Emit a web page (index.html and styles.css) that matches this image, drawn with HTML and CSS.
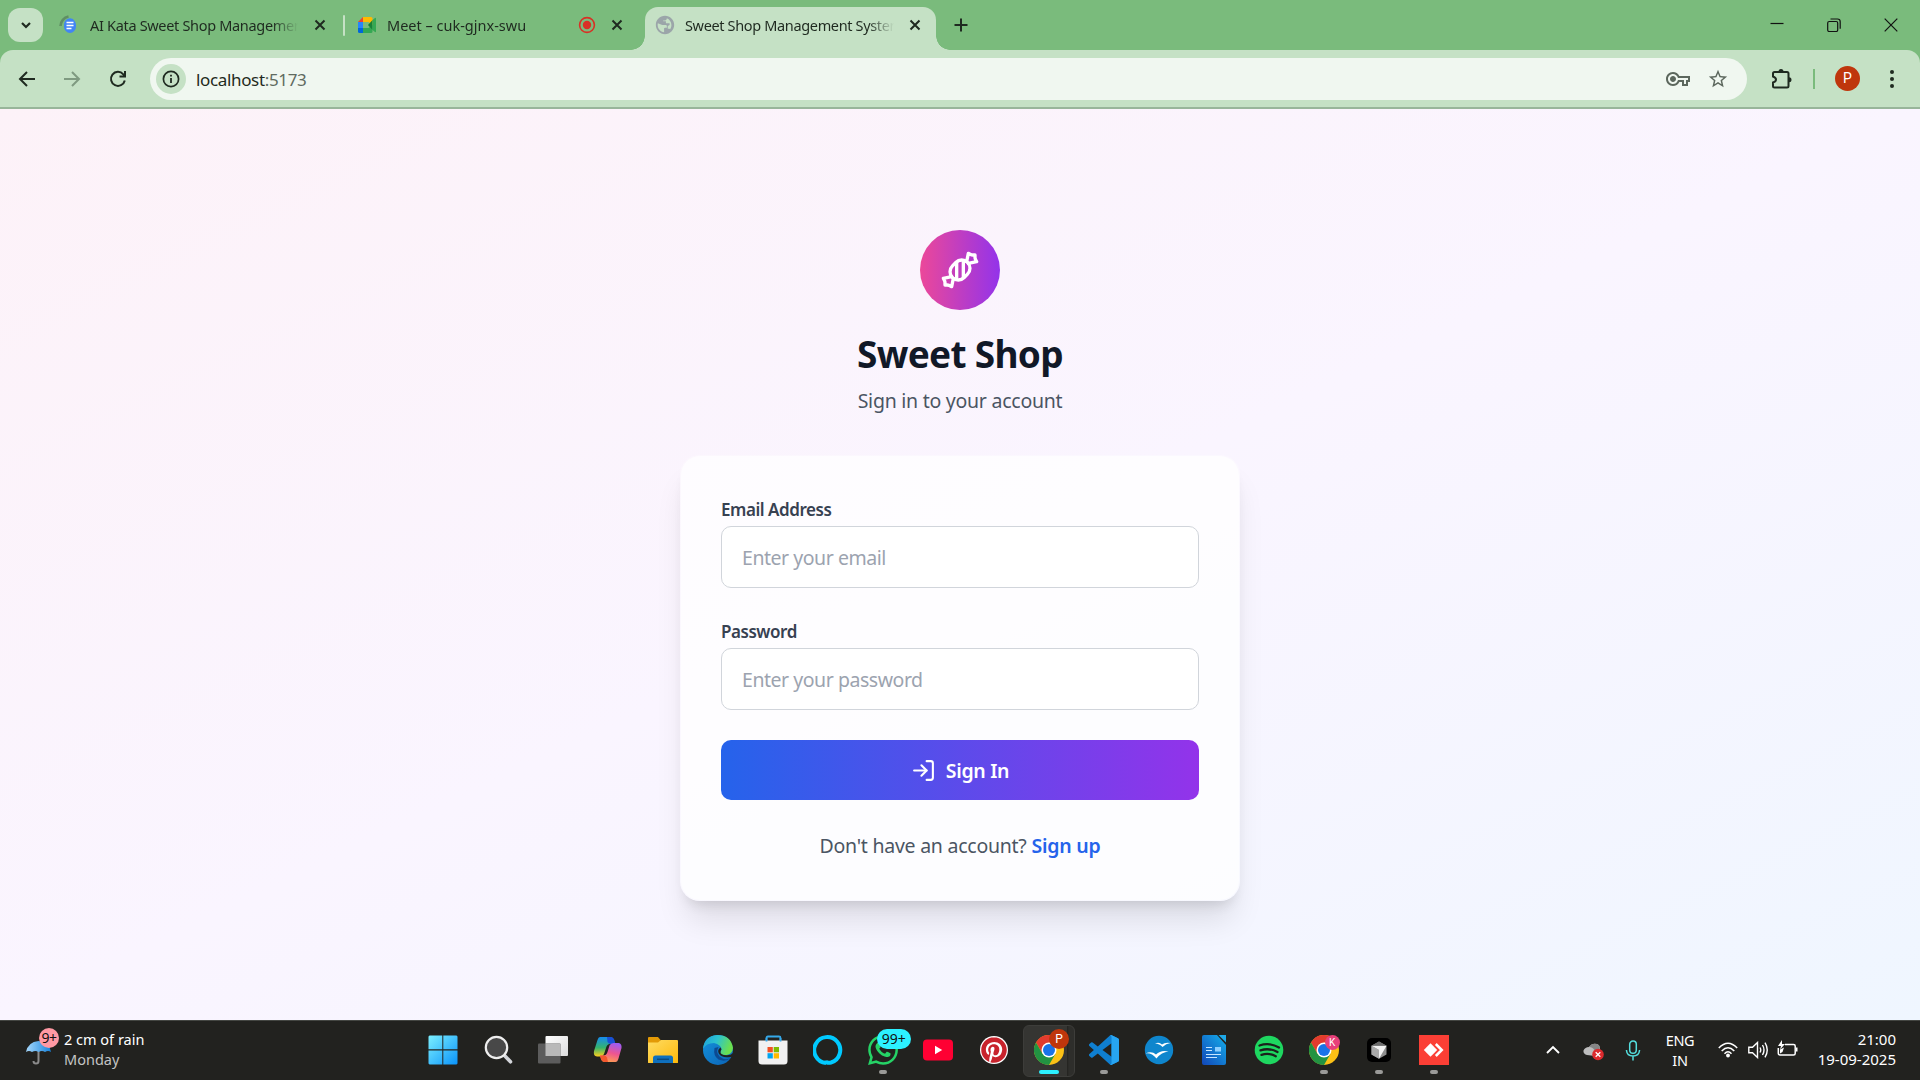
FILE: index.html
```html
<!DOCTYPE html>
<html lang="en">
<head>
<meta charset="utf-8">
<title>Sweet Shop Management System</title>
<link rel="stylesheet" href="styles.css">
</head>
<body>
<div class="desktop">
  <header class="tabstrip">
    <button class="tab-search" aria-label="Search tabs"><svg width="14" height="14" viewBox="0 0 14 14"><path d="M3 5l4 4 4-4" fill="none" stroke="#1f2a20" stroke-width="2.2"/></svg></button>
    <div class="tab tab-docs">
      <svg class="favicon" width="20" height="20" viewBox="0 0 20 20"><path d="M1.500 11A10 10 0 0 1 9.500 1.500" fill="none" stroke="#5f8f64" stroke-width="2.600"/><path d="M5 10a6 7 0 0 1 11-3.500q1 1.500 1 5a6 6.500 0 0 1-12 0z" fill="#4285f4"/><path d="M7.500 7.500h7M7.500 10.500h7M7.500 13.500h5" stroke="#fff" stroke-width="1.600"/></svg>
      <span class="tab-title t-docs">AI Kata Sweet Shop Management</span>
      <svg class="x" width="12" height="12" viewBox="0 0 12 12"><path d="M1.500 1.500l9 9m0-9l-9 9"/></svg>
    </div>
    <i class="tab-divider"></i>
    <div class="tab tab-meet">
      <svg class="favicon" width="20" height="18" viewBox="0 0 20 18"><path d="M1 6l5-5v5z" fill="#ea4335"/><path d="M6 1h8q1.500 0 1.500 1.500V9l-4-3H6z" fill="#ffba00"/><path d="M1 6h5v6H1z" fill="#2684fc"/><path d="M1 12h5v5H2.500Q1 17 1 15.500z" fill="#0066da"/><path d="M6 12h5.500l4-3v6.500q0 1.500-1.500 1.500H6z" fill="#34a853"/><path d="M11 9l4.500-5v10z" fill="#188038"/><path d="M15.500 4l2.500-2q1-.5 1 .5v13q0 1-1 .5l-2.500-2z" fill="#34a853"/></svg>
      <span class="tab-title t-meet">Meet – cuk-gjnx-swu</span>
      <svg class="rec" width="18" height="18" viewBox="0 0 18 18"><circle cx="9" cy="9" r="7.400" fill="none" stroke="#d93025" stroke-width="1.600"/><circle cx="9" cy="9" r="4.200" fill="#d93025"/></svg>
      <svg class="x" width="12" height="12" viewBox="0 0 12 12"><path d="M1.500 1.500l9 9m0-9l-9 9"/></svg>
    </div>
    <div class="tab tab-active">
      <svg class="favicon" width="22" height="22" viewBox="0 0 24 24"><path fill="#9ba5a9" d="M12 2C6.480 2 2 6.480 2 12s4.480 10 10 10 10-4.480 10-10S17.520 2 12 2zm-1 17.930c-3.950-.49-7-3.850-7-7.930 0-.62.08-1.210.21-1.790L9 12h4q1 0 1 1v2h-2c-1.100 0-1 1-1 2v2.930zm6.900-2.540c-.26-.81-1-1.390-1.900-1.390h-1v-3l2-1v-2h-4v-2h-3V7h2c1.100 0 2-.9 2-2v-.41c2.930 1.190 5 4.060 5 7.410 0 2.080-.8 3.970-2.100 5.390z"/></svg>
      <span class="tab-title t-active">Sweet Shop Management System</span>
      <svg class="x" width="12" height="12" viewBox="0 0 12 12"><path d="M1.500 1.500l9 9m0-9l-9 9"/></svg>
    </div>
    <svg class="new-tab" width="14" height="14" viewBox="0 0 14 14"><path d="M7 .5v13M.5 7h13" stroke="#1f2a20" stroke-width="2"/></svg>
    <div class="window-buttons">
      <svg width="14" height="14" viewBox="0 0 14 14"><path d="M.5 5.500h13"/></svg>
      <svg width="14" height="14" viewBox="0 0 14 14"><rect x=".7" y="3.500" width="10" height="10" rx="1.500"/><path d="M3.500 1h7q2.700 0 2.700 2.700v7"/></svg>
      <svg width="14" height="14" viewBox="0 0 14 14"><path d="M.7.7l12.600 12.600m0-12.600L.7 13.300"/></svg>
    </div>
  </header>

  <nav class="toolbar">
    <svg class="nav-icon" width="18" height="18" viewBox="0 0 18 18"><path d="M17 9H2M9 2L2 9l7 7"/></svg>
    <svg class="nav-icon nav-off" width="18" height="18" viewBox="0 0 18 18"><path d="M1 9h15M9 2l7 7-7 7"/></svg>
    <svg class="nav-icon" width="18" height="18" viewBox="0 0 18 18"><path d="M15.800 10.500A7 7 0 1 1 14.300 4.300L16 6M16 1v5.500h-5.500"/></svg>
    <div class="omnibox">
      <span class="site-info"><svg width="18" height="18" viewBox="0 0 18 18"><circle cx="9" cy="9" r="7.600" fill="none" stroke="#1f2a20" stroke-width="1.700"/><path d="M9 8v5M9 4.700v1.900" stroke="#1f2a20" stroke-width="1.800"/></svg></span>
      <span class="url">localhost<span>:5173</span></span>
      <svg class="key" width="24" height="24" viewBox="0 0 24 24"><path fill="#5c675d" d="M22 19h-6v-4h-2.680c-1.140 2.420-3.600 4-6.320 4-3.860 0-7-3.140-7-7s3.140-7 7-7c2.720 0 5.170 1.580 6.320 4H24v6h-2v4zm-4-2h2v-4h2v-2H11.940l-.23-.67C11.010 8.340 9.110 7 7 7c-2.760 0-5 2.240-5 5s2.240 5 5 5c2.110 0 4.010-1.340 4.710-3.330l.23-.67H18v4zM7 15c-1.650 0-3-1.350-3-3s1.350-3 3-3 3 1.350 3 3-1.350 3-3 3z"/></svg>
      <svg width="22" height="22" viewBox="0 0 24 24"><path fill="#5c675d" d="M22 9.240l-7.190-.62L12 2 9.190 8.630 2 9.240l5.460 4.730L5.820 21 12 17.270 18.180 21l-1.630-7.030L22 9.240zM12 15.400l-3.760 2.270 1-4.280-3.320-2.880 4.380-.38L12 6.100l1.710 4.040 4.380.38-3.320 2.880 1 4.280L12 15.400z"/></svg>
    </div>
    <svg class="extensions" width="22" height="22" viewBox="0 0 22 22"><path d="M3.500 4H16q1.500 0 1.500 1.500V18q0 1.500-1.500 1.500H3.500Q2 19.500 2 18v-3.500q3-.8 3-2.900T2 8.500v-3Q2 4 3.500 4z" fill="none" stroke="#1f2a20" stroke-width="2"/><path d="M7.500 3.500a2.500 2.500 0 0 1 5 0zM18 9.300a2.500 2.500 0 0 1 0 5z" fill="#1f2a20"/></svg>
    <i class="toolbar-divider"></i>
    <span class="avatar">P</span>
    <svg width="6" height="20" viewBox="0 0 6 20" fill="#1f2a20"><circle cx="3" cy="3" r="2"/><circle cx="3" cy="10" r="2"/><circle cx="3" cy="17" r="2"/></svg>
  </nav>

  <main class="page">
    <div class="logo"><svg width="40" height="40" viewBox="0 0 24 24" fill="none" stroke="#fff" stroke-width="2" stroke-linecap="round" stroke-linejoin="round"><path d="m9.500 7.500-2 2a4.950 4.950 0 1 0 7 7l2-2a4.950 4.950 0 1 0-7-7Z"/><path d="M14 6.500v10"/><path d="M10 7.500v10"/><path d="m16 7 1-5 1.370.68A3 3 0 0 0 19.700 3H21v1.300c0 .46.1.92.32 1.330L22 7l-5 1"/><path d="m8 17-1 5-1.370-.68A3 3 0 0 0 4.300 21H3v-1.300a3 3 0 0 0-.32-1.330L2 17l5-1"/></svg></div>
    <h1>Sweet Shop</h1>
    <p class="subtitle">Sign in to your account</p>
    <form class="card">
      <label for="email">Email Address</label>
      <input id="email" type="email" placeholder="Enter your email">
      <label for="password">Password</label>
      <input id="password" type="password" placeholder="Enter your password">
      <button class="submit" type="button"><svg width="25" height="25" viewBox="0 0 24 24" fill="none" stroke="#fff" stroke-width="2" stroke-linecap="round" stroke-linejoin="round"><path d="M15 3h4a2 2 0 0 1 2 2v14a2 2 0 0 1-2 2h-4"/><path d="M10 17l5-5-5-5"/><path d="M15 12H3"/></svg><span>Sign In</span></button>
      <p class="signup"><span>Don't have an account?</span><a>Sign up</a></p>
    </form>
  </main>

  <footer class="taskbar">
    <div class="weather">
      <div class="umbrella">
        <svg width="26" height="24" viewBox="0 0 26 24"><defs><linearGradient id="um"><stop offset="0" stop-color="#a6d8fb"/><stop offset="1" stop-color="#1683dc"/></linearGradient></defs><path d="M12.500 9v11q0 2.500-2.500 2.500T7.500 20" fill="none" stroke="#8b8b8b" stroke-width="2"/><path d="M0 11Q2 1 12.500 0 23 1 25 11q-3-2-6 0-3-2-6.500 0-3-2-6.500 0-3-2-6 0z" fill="url(#um)"/></svg>
        <span class="alert">9+</span>
      </div>
      <div class="weather-text"><span>2 cm of rain</span><span class="dim">Monday</span></div>
    </div>

    <div class="apps">
      <div class="app"><svg viewBox="0 0 30 30"><defs><linearGradient id="win" x1="0" y1="0" x2="1" y2="1"><stop offset="0" stop-color="#7cf0ff"/><stop offset="1" stop-color="#0a93fa"/></linearGradient></defs><path d="M1.500.5H14.300V14.300H.5V1.500zM15.300.5H28.500l1 1V14.300H15.300zM.5 15.500H14.300V29.500H1.500l-1-1zM15.300 15.500H29.500V28.500l-1 1H15.300z" fill="url(#win)"/></svg></div>
      <div class="app"><svg viewBox="0 0 30 30"><path d="M21 20l6.500 6.800" stroke="#d4d6da" stroke-width="3.600" stroke-linecap="round"/><circle cx="13.500" cy="12.500" r="10.700" fill="#484848" stroke="#eee" stroke-width="2.200"/></svg></div>
      <div class="app"><svg viewBox="0 0 30 30"><defs><linearGradient id="tv" x1="0" y1="0" x2="1" y2="1"><stop offset="0" stop-color="#fff"/><stop offset="1" stop-color="#dcdcdc"/></linearGradient></defs><rect x="7.500" y="1" width="22.500" height="20" rx="1" fill="url(#tv)"/><rect x="0" y="8.500" width="22.500" height="20" rx="1" fill="#5c5c5c"/><rect x="7.500" y="8.500" width="15" height="12.500" fill="#b9b9b9"/></svg></div>
      <div class="app"><svg viewBox="0 0 30 30"><defs><linearGradient id="cpa" x1="0" y1="0" x2="0" y2="1"><stop offset="0" stop-color="#168bf0"/><stop offset=".55" stop-color="#35b46c"/><stop offset="1" stop-color="#ffcf1c"/></linearGradient><linearGradient id="cpb" x1=".6" y1="0" x2=".3" y2="1"><stop offset="0" stop-color="#a05cf0"/><stop offset=".5" stop-color="#ee5590"/><stop offset="1" stop-color="#ffa24e"/></linearGradient></defs><path d="M7 2h10q3 0 4 3.500L22 9h-5q-3 0-4 4l-2 6q-1 2.500-4 2.500H4Q0 21 1 16L4.500 5Q5.400 2 7 2z" fill="url(#cpa)"/><path d="M14 2h4q2.500 0 3.500 3.500L22.500 9H18q-2.500 0-3.500-2z" fill="#1950d6"/><path d="M22.500 27H12q-3 0-4-3l-1-3.500h3q3.500 0 4.500-3.500l2-6.500Q17.500 8 20.500 8H26q3 1 2.500 5l-3 10.500q-1 3.500-3 3.500z" fill="url(#cpb)"/><path d="M7 20.500h4q2 0 3 2l1 4.500h-3q-3 0-4-3z" fill="#f4572f"/></svg></div>
      <div class="app"><svg viewBox="0 0 30 30"><defs><linearGradient id="fo" x1="0" y1="0" x2="1" y2="1"><stop offset="0" stop-color="#ffdc62"/><stop offset="1" stop-color="#fdb90b"/></linearGradient></defs><path d="M0 3q0-1 1-1h9l3 3.500V9H0z" fill="#e39a06"/><path d="M0 7.500h10L13 5h16q1 0 1 1v21.500q0 .5-1 .5H1q-1 0-1-.5z" fill="url(#fo)"/><path d="M5 28v-5q0-2.500 2.500-2.500h15Q25 20.500 25 23v5z" fill="#0f70bd"/><path d="M9 24.300h12" stroke="#0a4a80" stroke-width="1.500"/></svg></div>
      <div class="app"><svg viewBox="0 0 30 30"><defs><linearGradient id="ed" x1="0" y1="0" x2="1" y2=".3"><stop offset="0" stop-color="#1c9edb"/><stop offset=".5" stop-color="#2cc3cf"/><stop offset="1" stop-color="#6be04e"/></linearGradient><linearGradient id="ee" x1="0" y1="0" x2="1" y2="1"><stop offset="0" stop-color="#1493dd"/><stop offset="1" stop-color="#0b62b4"/></linearGradient></defs><circle cx="15" cy="15" r="15" fill="url(#ee)"/><path d="M0 14Q1 1 14 0 28 0 30 13q-.5 6-6.500 7-6 .3-6-2.500 0-1.500 1.200-3Q18 9.500 11 8 3 8 0 14z" fill="url(#ed)"/><path d="M11.500 13q-1.500 8 4 11.500 7 3 13-2-6 4-12-1-4-4-1-9.500z" fill="#0c4a92"/><path d="M17.600 12.500q-3.600 2-1.800 6 3 4.500 9.700 3.700l4.500-.5V18q-2 2.500-6.500 2.300-7-.3-5.900-4 1.500-2 0-3.800z" fill="#22221f"/></svg></div>
      <div class="app"><svg viewBox="0 0 30 30"><path d="M8.500 8V3q0-1.500 1.500-1.500h11q1.500 0 1.500 1.500v5" fill="none" stroke="#35a9ea" stroke-width="1.800"/><path d="M.5 5.500h29V26q0 3.500-3.500 3.500H4Q.5 29.500.5 26z" fill="#f1f1f1"/><path d="M8.500 6.500V3M22.500 6.500V3" stroke="#35a9ea" stroke-width="1.800"/><path d="M9.500 12h5.300v5.300H9.500z" fill="#f25022"/><path d="M15.700 12H21v5.300h-5.300z" fill="#7fba00"/><path d="M9.500 18.200h5.300v5.300H9.500z" fill="#00a4ef"/><path d="M15.700 18.200H21v5.300h-5.300z" fill="#ffb900"/></svg></div>
      <div class="app"><svg viewBox="0 0 30 30"><path d="M13 28a13 13 0 1 1 5-.5Q13 28.500 12.500 25.500" fill="none" stroke="#00caff" stroke-width="4"/></svg></div>
      <div class="app running"><svg viewBox="0 0 24 24"><path fill="#25d366" d="M17.472 14.382c-.297-.149-1.758-.867-2.030-.967-.273-.099-.471-.148-.67.15-.197.297-.767.966-.94 1.164-.173.199-.347.223-.644.075-.297-.15-1.255-.463-2.390-1.475-.883-.788-1.480-1.761-1.653-2.059-.173-.297-.018-.458.13-.606.134-.133.298-.347.446-.52.149-.174.198-.298.298-.497.099-.198.05-.371-.025-.52-.075-.149-.669-1.612-.916-2.207-.242-.579-.487-.5-.669-.51-.173-.008-.371-.01-.57-.01-.198 0-.52.074-.792.372-.272.297-1.040 1.016-1.040 2.479 0 1.462 1.065 2.875 1.213 3.074.149.198 2.096 3.200 5.077 4.487.709.306 1.262.489 1.694.625.712.227 1.360.195 1.871.118.571-.085 1.758-.719 2.006-1.413.248-.694.248-1.289.173-1.413-.074-.124-.272-.198-.57-.347m-5.421 7.403h-.004a9.870 9.870 0 01-5.031-1.378l-.361-.214-3.741.982.998-3.648-.235-.374a9.860 9.860 0 01-1.510-5.260c.001-5.450 4.436-9.884 9.888-9.884 2.640 0 5.122 1.030 6.988 2.898a9.825 9.825 0 012.893 6.994c-.003 5.450-4.437 9.884-9.885 9.884m8.413-18.297A11.815 11.815 0 0012.050 0C5.495 0 .16 5.335.157 11.892c0 2.096.547 4.142 1.588 5.945L.057 24l6.305-1.654a11.882 11.882 0 005.683 1.448h.005c6.554 0 11.890-5.335 11.893-11.893a11.821 11.821 0 00-3.480-8.413z"/></svg><span class="count">99+</span></div>
      <div class="app"><svg viewBox="0 0 30 30"><rect y="4.500" width="30" height="21" rx="4" fill="#ff0033"/><path d="M12 10.800v8.400l7.200-4.200z" fill="#fff"/></svg></div>
      <div class="app"><svg viewBox="0 0 30 30"><circle cx="15" cy="15" r="14" fill="#fff"/><path transform="translate(2.200 2.200) scale(1.067)" fill="#c8232c" d="M12.017 0C5.396 0 .029 5.367.029 11.987c0 5.079 3.158 9.417 7.618 11.162-.105-.949-.199-2.403.041-3.439.219-.937 1.406-5.957 1.406-5.957s-.359-.72-.359-1.781c0-1.663.967-2.911 2.168-2.911 1.024 0 1.518.769 1.518 1.688 0 1.029-.653 2.567-.992 3.992-.285 1.193.6 2.165 1.775 2.165 2.128 0 3.768-2.245 3.768-5.487 0-2.861-2.063-4.869-5.008-4.869-3.410 0-5.409 2.562-5.409 5.199 0 1.033.394 2.143.889 2.741.099.12.112.225.085.345-.09.375-.293 1.199-.334 1.363-.053.225-.172.271-.401.165-1.495-.69-2.433-2.878-2.433-4.646 0-3.776 2.748-7.252 7.920-7.252 4.158 0 7.392 2.967 7.392 6.923 0 4.135-2.607 7.462-6.233 7.462-1.214 0-2.354-.629-2.758-1.379l-.749 2.848c-.269 1.045-1.004 2.352-1.498 3.146 1.123.345 2.306.535 3.550.535 6.607 0 11.985-5.365 11.985-11.987C23.970 5.390 18.592.026 11.985.026L12.017 0z"/></svg></div>
      <div class="app active"><svg viewBox="0 0 30 30"><circle cx="15" cy="15" r="15" fill="#fbc116"/><path d="M2 7.500A15 15 0 0 1 28 7.500H15L8.500 18.800z" fill="#e33b2e"/><path d="M2 7.500A15 15 0 0 0 15 30l6.500-11.200H8.500z" fill="#229342"/><circle cx="15" cy="15" r="7.500" fill="#fff"/><circle cx="15" cy="15" r="6" fill="#1a73e8"/></svg><span class="profile profile-p">P</span></div>
      <div class="app running"><svg viewBox="0 0 24 24"><path fill="#0f7fd0" d="M23.150 2.587L18.210.21a1.494 1.494 0 0 0-1.705.29l-9.460 8.630-4.120-3.128a.999.999 0 0 0-1.276.057L.327 7.261A1 1 0 0 0 .326 8.740L3.899 12 .326 15.260a1 1 0 0 0 .001 1.479L1.650 17.940a.999.999 0 0 0 1.276.057l4.120-3.128 9.460 8.630a1.492 1.492 0 0 0 1.704.29l4.942-2.377A1.500 1.500 0 0 0 24 20.060V3.939a1.500 1.500 0 0 0-.85-1.352zm-5.146 14.861L10.826 12l7.178-5.448v10.896z"/><path fill="#27a5f2" d="M23.150 2.587L18.210.21q-.7-.3-1.205 0 1 .5 1 1.500v20.600q0 1-1 1.500.6.400 1.205 0l4.942-2.377A1.500 1.500 0 0 0 24 20.060V3.939a1.500 1.500 0 0 0-.85-1.352z"/></svg></div>
      <div class="app"><svg viewBox="0 0 30 30"><circle cx="15" cy="15" r="14.200" fill="#0f86cd"/><path d="M11 8.500q4-2 7 1 3-2.500 8.500-1.500-4.500.5-8 4-3-3.500-7.500-3.500zM1.500 18.500q6-3 10.500 1 5-5 12.500-3-7 .5-12 7-5-6-11-5z" fill="#fff"/></svg></div>
      <div class="app"><svg viewBox="0 0 30 30"><defs><linearGradient id="wr" x1="1" y1="0" x2="0" y2="1"><stop offset="0" stop-color="#14b0ea"/><stop offset="1" stop-color="#1246b8"/></linearGradient></defs><path d="M5 0H18L27 10V28q0 2-2 2H5q-2 0-2-2V2q0-2 2-2z" fill="url(#wr)"/><path d="M19.500 0H27V7.500z" fill="#1ea9e8"/><path d="M7 12.500h6M7 15.500h6M7 19.500h15M7 22.500h11" stroke="#c6e6ff" stroke-width="1.200"/><path d="M16 12h6v4.500h-6z" fill="#8ccfff"/></svg></div>
      <div class="app"><svg viewBox="0 0 30 30"><circle cx="15" cy="15" r="14.300" fill="#1ed760"/><path d="M5.500 10.500Q15.500 7 25 12.500M6.500 15.300Q15.500 12.500 23.500 17M7.500 19.800Q15 17.500 21.800 21.200" fill="none" stroke="#1b211c" stroke-width="2.300" stroke-linecap="round"/></svg></div>
      <div class="app running"><svg viewBox="0 0 30 30"><circle cx="15" cy="15" r="15" fill="#fbc116"/><path d="M2 7.500A15 15 0 0 1 28 7.500H15L8.500 18.800z" fill="#e33b2e"/><path d="M2 7.500A15 15 0 0 0 15 30l6.500-11.200H8.500z" fill="#229342"/><circle cx="15" cy="15" r="7.500" fill="#fff"/><circle cx="15" cy="15" r="6" fill="#1a73e8"/></svg><span class="profile profile-k">K</span></div>
      <div class="app running"><svg viewBox="0 0 30 30"><rect x="3" y="3" width="24" height="24" rx="5" fill="#000"/><path d="M15 6.500l7.500 4.300v8.700L15 23.800l-7.500-4.300v-8.700z" fill="#8d8d8d"/><path d="M7.500 10.800h15L15 23.800V15z" fill="#f2f2f2"/><path d="M15 6.500l7.500 4.300h-15z" fill="#6b6b6b"/><path d="M7.500 10.800L15 15v8.800l-7.500-4.300z" fill="#aaa"/></svg></div>
      <div class="app running"><svg viewBox="0 0 30 30"><path d="M0 0h30v30H0z" fill="#fb3f35"/><path d="M11.500 8.300l6.700 6.700-6.700 6.700L4.800 15z" fill="#fff"/><path d="M16.800 9l6 6-6 6" fill="none" stroke="#fff" stroke-width="2.500"/></svg></div>
    </div>

    <div class="tray">
      <svg class="t-up" width="14" height="10" viewBox="0 0 14 10"><path d="M1 8l6-6 6 6" fill="none" stroke="#fff" stroke-width="1.900"/></svg>
      <svg class="t-cloud" width="22" height="18" viewBox="0 0 22 18"><path d="M4 12Q0 11 .5 7.500 2 4 6 4q3-4.500 8-3 3 1 3 5l-5 7z" fill="#bdbdbd"/><path d="M6 4q3-4.500 8-3 3 1 3 4.500L12 8Q10 4 6 4z" fill="#868686"/><circle cx="15" cy="11.500" r="5.800" fill="#dc2a2d"/><path d="M12.700 9.200l4.600 4.600m0-4.600l-4.600 4.600" stroke="#fff" stroke-width="1.300"/></svg>
      <svg class="t-mic" width="16" height="21" viewBox="0 0 16 21"><path d="M8 1a3.300 3.300 0 0 1 3.300 3.300V10a3.300 3.300 0 0 1-6.600 0V4.300A3.300 3.300 0 0 1 8 1zM1.500 10v.5q.5 5.500 6.500 5.500t6.500-5.500V10M8 16v4.500" fill="none" stroke="#54dede" stroke-width="1.500"/></svg>
      <div class="lang"><span>ENG</span><span>IN</span></div>
      <svg class="t-wifi" width="20" height="16" viewBox="0 0 20 16"><path d="M.8 6Q10-3.500 19.200 6M3.700 9Q10 2.500 16.300 9M6.500 11.700Q10 8 13.500 11.700" fill="none" stroke="#fff" stroke-width="1.500"/><circle cx="10" cy="13.500" r="1.900" fill="#fff"/></svg>
      <svg class="t-sound" width="20" height="18" viewBox="0 0 20 18"><path d="M.8 6.200h3.700L9.500 1.500v15l-5-4.700H.8zM12 6.500q1.500 2.500 0 5M14.500 4q3 5 0 10M17 1.700q4.500 7.300 0 14.600" fill="none" stroke="#fff" stroke-width="1.400"/></svg>
      <svg class="t-batt" width="22" height="18" viewBox="0 0 22 18"><path d="M8 4.500h8.500Q18.200 4.500 18.200 6v7.500q0 1.500-1.700 1.500H3q-1.700 0-1.700-1.700V8" fill="none" stroke="#fff" stroke-width="1.500"/><path d="M19 7.500h1.500v4H19zM5 0L1 6h3L3 9.500 8 4H5z" fill="#fff"/><path d="M3 9.500l4-2-1.500 4.500L3 13.500z" fill="#fff"/></svg>
      <div class="clock"><span>21:00</span><span>19-09-2025</span></div>
    </div>
  </footer>
</div>
</body>
</html>
```
FILE: styles.css
```css
* { box-sizing: border-box; }
body { margin: 0; font-family: "Noto Sans", "Open Sans", sans-serif; overflow: hidden; }
svg { display: block; flex: none; }
.desktop { width: 1920px; height: 1080px; display: flex; flex-direction: column; background: #7abb7c; }

/* tab strip */
.tabstrip { height: 50px; display: flex; align-items: center; padding-left: 8px; color: #1f2a20; font-size: 14.500px; }
.tab-search { width: 35px; height: 34px; border: 0; padding: 0; border-radius: 12px; background: #c5e1c5; display: flex; align-items: center; justify-content: center; }
.tab { display: flex; align-items: center; height: 43px; margin-top: 7px; padding-bottom: 7px; }
.tab-docs { width: 300px; padding-left: 16px; }
.tab-meet { width: 300px; padding-left: 12px; }
.tab-active { width: 291px; padding-left: 9px; background: #c5e1c5; border-radius: 13px 13px 0 0; position: relative; }
.tab-active::before, .tab-active::after { content: ""; position: absolute; bottom: 0; width: 14px; height: 14px; }
.tab-active::before { left: -14px; background: radial-gradient(circle at 0 0, transparent 13.500px, #c5e1c5 14px); }
.tab-active::after { right: -14px; background: radial-gradient(circle at 100% 0, transparent 13.500px, #c5e1c5 14px); }
.tab-title { white-space: nowrap; overflow: hidden; line-height: 20px; -webkit-mask-image: linear-gradient(90deg, #000 calc(100% - 26px), transparent); mask-image: linear-gradient(90deg, #000 calc(100% - 26px), transparent); }
.t-docs { width: 208px; margin: 0 16px 0 11px; letter-spacing: -.32px; }
.t-meet { width: 180px; margin: 0 11px 0 10px; letter-spacing: 0; }
.t-active { width: 209px; margin: 0 15px 0 9px; letter-spacing: -.35px; }
.rec { margin-right: 15px; }
.x path { stroke: #1f2a20; stroke-width: 2; }
.tab-divider { width: 2px; height: 21px; background: #c5e1c5; border-radius: 1px; }
.new-tab { margin-left: 18px; }
.window-buttons { margin-left: auto; margin-right: 22px; display: flex; gap: 43px; }
.window-buttons path, .window-buttons rect { fill: none; stroke: #111; stroke-width: 1.200; }

/* toolbar */
.toolbar { height: 59px; display: flex; align-items: center; padding: 1px 25px 0 18px; background: #c5e1c5; border-radius: 13px 13px 0 0; border-bottom: 2px solid #98b59a; }
.nav-icon { margin-right: 27px; fill: none; stroke: #1f2a20; stroke-width: 2; }
.nav-off { stroke: #7f9a81; }
.nav-icon:nth-child(2) { margin-right: 28px; }
.nav-icon:nth-child(3) { margin-right: 23px; }
.omnibox { flex: 1; height: 42px; border-radius: 21px; background: #f0f7f0; display: flex; align-items: center; padding: 0 18px 0 6px; }
.site-info { width: 30px; height: 30px; border-radius: 50%; background: #c5e1c5; display: flex; align-items: center; justify-content: center; }
.url { flex: 1; margin-left: 10px; font-size: 17px; letter-spacing: -.35px; color: #1f2a20; }
.url span { color: #5f6b60; }
.key { margin-right: 17px; }
.extensions { margin: 0 20px 0 24px; }
.toolbar-divider { width: 2px; height: 20px; background: #7abb7c; margin-right: 20px; }
.avatar { width: 25px; height: 25px; border-radius: 50%; background: #bf360c; color: #fff; font: 14px/25px Roboto, sans-serif; text-align: center; margin: -1px 29px 0 0; }

/* sign-in page */
.page { flex: 1; display: flex; flex-direction: column; align-items: center; padding-top: 121px; background: linear-gradient(to bottom right, #fdf2f8, #faf5ff 50%, #eff6ff); }
.logo { width: 80px; height: 80px; border-radius: 50%; background: linear-gradient(90deg, #ec4899, #9333ea); display: flex; align-items: center; justify-content: center; }
h1 { margin: 21px 0 0; font-size: 37px; line-height: 45px; font-weight: 700; letter-spacing: -.7px; color: #111827; }
.subtitle { margin: 10px 0 39px; font-size: 19.500px; line-height: 30px; letter-spacing: -.25px; color: #4b5563; }
.card { width: 560px; height: 446px; padding: 41px 40px 38px; border: 1px solid rgba(255,255,255,.3); border-radius: 20px; background: rgba(255,255,255,.75) padding-box; display: flex; flex-direction: column; box-shadow: 0 25px 31px -6px rgba(0,0,0,.1), 0 10px 13px -7px rgba(0,0,0,.12); }
.card > * { flex-shrink: 0; }
label { font-size: 17px; line-height: 25px; font-weight: 600; letter-spacing: -.45px; color: #374151; margin-bottom: 4px; }
input { height: 62px; margin: 0 0 31px; padding: 0 20px; border: 1px solid #d1d5db; border-radius: 10px; background: #fff; font: 19.500px "Noto Sans", sans-serif; letter-spacing: -.46px; }
input::placeholder { color: #9ca3af; opacity: 1; }
.submit { height: 60px; margin-top: -1px; border: 0; border-radius: 10px; background: linear-gradient(90deg, #2563eb, #9333ea); color: #fff; display: flex; align-items: center; justify-content: center; gap: 10px; font: 600 19.500px "Noto Sans", sans-serif; letter-spacing: -.3px; }
.signup { margin: 31px 0 0; display: flex; justify-content: center; gap: 5px; font-size: 19.500px; line-height: 30px; letter-spacing: -.25px; color: #4b5563; }
.signup a { color: #2563eb; font-weight: 600; letter-spacing: -.25px; }

/* taskbar */
.taskbar { height: 60px; display: flex; align-items: flex-start; background: #22221f; border-top: 1px solid #444642; color: #fff; font-size: 14.500px; line-height: 20px; }
.weather { width: 415px; display: flex; padding: 8px 0 0 26px; }
.umbrella { width: 38px; padding-top: 12px; position: relative; }
.alert { position: absolute; left: 13px; top: -1px; width: 20px; height: 20px; border-radius: 50%; background: #ff99a4; color: #111; font-size: 14px; line-height: 20px; text-align: center; letter-spacing: -.5px; }
.weather-text, .lang, .clock { display: flex; flex-direction: column; }
.dim { color: #c4c4c4; }
.apps { width: 1047px; height: 59px; display: grid; grid-template-columns: repeat(19, 1fr); }
.app { position: relative; display: flex; justify-content: center; padding-top: 14px; }
.app > svg { width: 30px; height: 30px; position: relative; }
.running::after, .active::after { content: ""; position: absolute; left: 50%; top: 49px; width: 8px; height: 4px; margin-left: -4px; border-radius: 2px; background: #9a9a98; }
.active::after { width: 20px; margin-left: -10px; background: #2cf1ff; }
.active::before { content: ""; position: absolute; left: 2px; top: 4px; width: 50px; height: 50px; border-radius: 6px; background: linear-gradient(90deg, #353532 43px, #22221f 43px, #2e2e2b 45px); border: 1px solid #3d3d3a; }
.count { position: absolute; left: 21px; top: 8px; width: 34px; height: 20px; border-radius: 10px; background: #2cf1ff; color: #111; font-size: 14px; line-height: 20px; text-align: center; }
.profile { position: absolute; border-radius: 50%; color: #fff; font-family: Roboto, sans-serif; text-align: center; }
.profile-p { left: 28px; top: 8px; width: 20px; height: 20px; background: #bf360c; font-size: 12px; line-height: 20px; }
.profile-k { left: 28px; top: 14px; width: 15px; height: 15px; background: #e8407a; font-size: 10px; line-height: 15px; }
.tray { margin-left: auto; padding-right: 24px; display: flex; }
.t-up { margin: 24px 23px 0 0; }
.t-cloud { margin: 22px 20.500px 0 0; }
.t-mic { margin: 19px 24px 0 0; }
.lang { width: 30px; align-items: center; padding-top: 9px; letter-spacing: -.3px; white-space: nowrap; margin-right: 23px; }
.t-wifi { margin: 21px 10px 0 0; }
.t-sound { margin: 20px 9px 0 0; }
.t-batt { margin: 19px 19px 0 0; }
.clock { width: 78px; align-items: flex-end; padding-top: 8px; font-size: 15px; letter-spacing: 0; white-space: nowrap; }
```
